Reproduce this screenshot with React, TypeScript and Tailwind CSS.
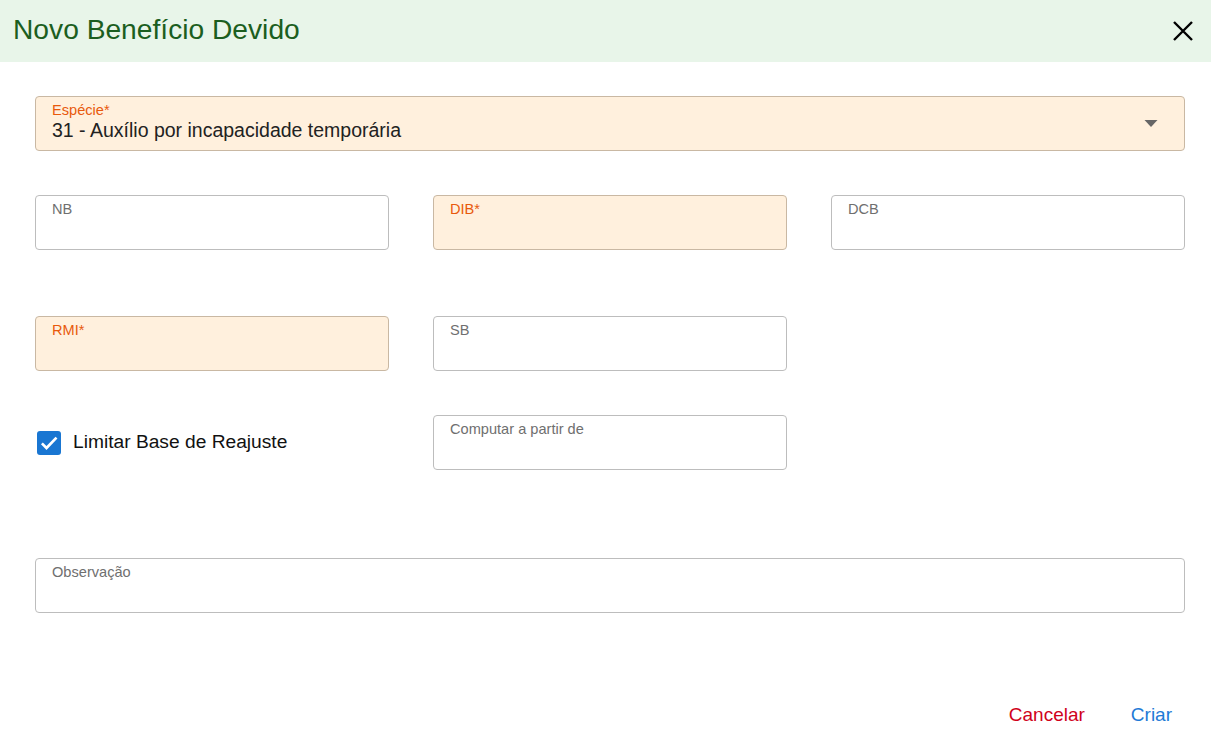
import React from "react";

function Field({ label, required, className = "" }: { label: string; required?: boolean; className?: string }) {
  return (
    <div
      className={
        "h-[55px] rounded-[4px] border px-4 pt-[5px] " +
        (required ? "border-[#c9b8a3] bg-[#fff0dd]" : "border-[#bdbdbd] bg-white") +
        " " +
        className
      }
    >
      <div className={"text-[14.6px] leading-[17px] " + (required ? "text-[#e8590c]" : "text-[#6f6f6f]")}>{label}</div>
    </div>
  );
}

export default function App() {
  return (
    <div className="w-[1211px] h-[739px] bg-white overflow-hidden font-['Liberation_Sans',Arial,sans-serif]">
      <div className="h-[62px] bg-[#e8f5e9] flex items-center justify-between pl-[13px] pr-[16px]">
        <h1 className="text-[28.2px] text-[#1b5e20] leading-none -mt-[3px]">Novo Benefício Devido</h1>
        <svg width="24" height="24" viewBox="0 0 24 24" className="-mt-[1px]">
          <path d="M3 3 L21 21 M21 3 L3 21" stroke="#000" strokeWidth="2.4" fill="none" />
        </svg>
      </div>

      <div className="pl-[35px] pr-[26px] pt-[34px]">
        <div className="h-[55px] rounded-[4px] border border-[#c9b8a3] bg-[#fff0dd] pl-4 pr-[26px] pt-[5px] flex items-start justify-between">
          <div>
            <div className="text-[14.6px] leading-[17px] text-[#e8590c]">Espécie*</div>
            <div className="text-[19.5px] leading-[22px] text-[#222]">31 - Auxílio por incapacidade temporária</div>
          </div>
          <svg width="14" height="8" viewBox="0 0 14 8" className="mt-[18px]">
            <path d="M0.5 0 L13.5 0 L7 7 Z" fill="#666" />
          </svg>
        </div>

        <div className="grid grid-cols-3 gap-x-[44px] mt-[44px]">
          <Field label="NB" />
          <Field label="DIB*" required />
          <Field label="DCB" />
        </div>

        <div className="grid grid-cols-3 gap-x-[44px] mt-[66px]">
          <Field label="RMI*" required />
          <Field label="SB" />
          <div />
        </div>

        <div className="grid grid-cols-3 gap-x-[44px] mt-[44px]">
          <div className="flex items-center gap-[12px] pl-[2px]">
            <div className="w-[24px] h-[24px] rounded-[3px] bg-[#1976d2] flex items-center justify-center">
              <svg width="20" height="20" viewBox="0 0 24 24">
                <path d="M3.5 12.5 L9 18 L21 5.5" stroke="#fff" strokeWidth="3.2" fill="none" />
              </svg>
            </div>
            <span className="text-[19.2px] text-[#111]">Limitar Base de Reajuste</span>
          </div>
          <Field label="Computar a partir de" />
          <div />
        </div>

        <Field label="Observação" className="mt-[88px]" />

        <div className="flex justify-end items-center gap-[46px] mt-[88px] pr-[13px]">
          <span className="text-[19px] text-[#d0021b]">Cancelar</span>
          <span className="text-[19px] text-[#1e7ad6]">Criar</span>
        </div>
      </div>
    </div>
  );
}
